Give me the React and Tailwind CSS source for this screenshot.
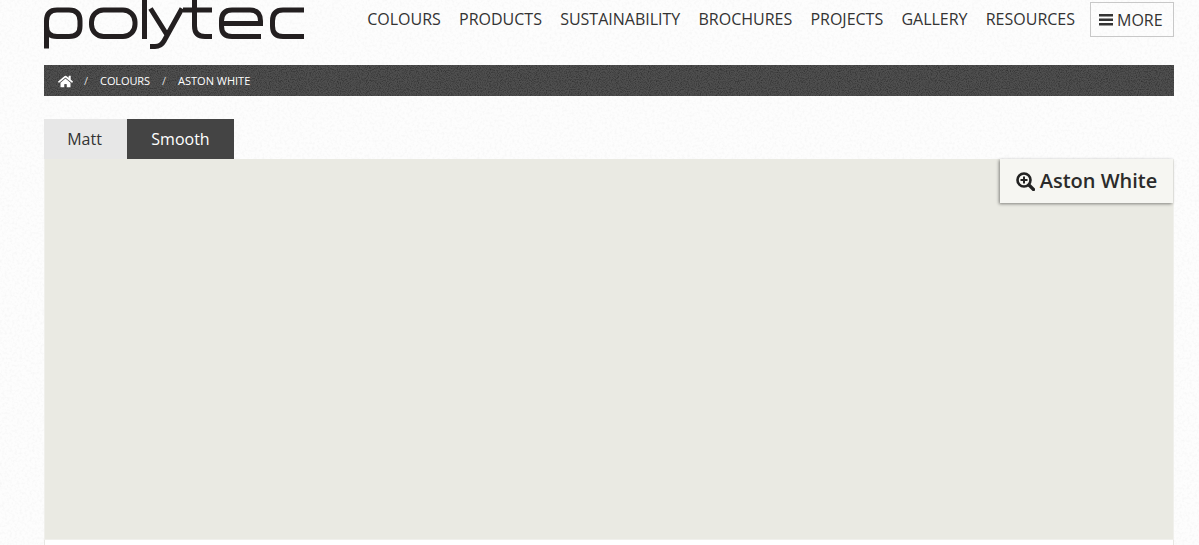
import React from "react";
import { FaHome } from "react-icons/fa";

const nav = ["COLOURS", "PRODUCTS", "SUSTAINABILITY", "BROCHURES", "PROJECTS", "GALLERY"];

function Noise({ id, freq, values }) {
  return (
    <svg className="absolute inset-0 w-full h-full pointer-events-none" aria-hidden="true">
      <filter id={id} x="0" y="0" width="100%" height="100%">
        <feTurbulence type="fractalNoise" baseFrequency={freq} numOctaves="2" seed="3" />
        <feColorMatrix type="matrix" values={values} />
      </filter>
      <rect width="100%" height="100%" filter={`url(#${id})`} />
    </svg>
  );
}

function Logo() {
  return (
    <svg width="262" height="50" viewBox="0 0 262 50" fill="none" stroke="#231f20" strokeWidth="5" className="block shrink-0">
      <path d="M2.500 48.500V21Q2.500 10 13 10H25Q36 10 36 21V26Q36 36.500 25 36.500H13Q2.500 36.500 2.500 26" />
      <rect x="47.500" y="10" width="43.500" height="26.500" rx="12" />
      <path d="M100.500 0V39" />
      <path d="M106.500 8.500L124 36.500M138 8.500L120 41Q117 46.500 111 46.500H106" />
      <path d="M139 10H168M150.500 0V26Q150.500 36.500 161 36.500H168" />
      <path d="M217 36.500H188Q177.500 36.500 177.500 26V21Q177.500 10 188 10H206Q216.500 10 216.500 21V23.500H177.500" />
      <path d="M260 10H239Q228.500 10 228.500 21V26Q228.500 36.500 239 36.500H260" />
    </svg>
  );
}

export default function App() {
  return (
    <div className="relative h-[545px] overflow-hidden bg-[#fdfdfd] font-['Open_Sans','Noto_Sans',sans-serif]">
      <Noise id="pagenoise" freq="0.4" values="0 0 0 0 0.7  0 0 0 0 0.7  0 0 0 0 0.7  0 0 0 0.4 -0.17" />
      <div className="relative mx-[44px] w-[1130px]">
        <header className="flex h-[65px] justify-between">
          <Logo />
          <nav className="flex h-[37px] items-center pt-[1px] text-[16px] text-[#333333]">
            {nav.map((n) => (
              <span key={n} className="mr-[18.200px] leading-[36px]">{n}</span>
            ))}
            <span className="mr-[15px] leading-[36px]">RESOURCES</span>
            <span className="mt-[1px] flex h-[35px] w-[84px] items-center gap-[4px] border border-[#c8c8c8] pl-[8px]">
              <svg width="14" height="12" viewBox="0 0 14 12" fill="#333333">
                <rect y="0" width="14" height="2.500" />
                <rect y="4.500" width="14" height="2.500" />
                <rect y="9" width="14" height="2.500" />
              </svg>
              MORE
            </span>
          </nav>
        </header>

        <div className="relative flex h-[31px] items-center overflow-hidden bg-[#4f4f4f] pl-[14px] text-[11px] text-white">
          <Noise id="barnoise" freq="0.9" values="0 0 0 0 0  0 0 0 0 0  0 0 0 0 0  0 0 0 0.800 -0.320" />
          <span className="relative flex items-center pt-[1px]">
            <FaHome size={15} color="#ffffff" />
            <span className="ml-[11px] text-[#dddddd]">/</span>
            <span className="ml-[12px] tracking-[-0.1px]">COLOURS</span>
            <span className="ml-[12px] text-[#dddddd]">/</span>
            <span className="ml-[12px]">ASTON WHITE</span>
          </span>
        </div>

        <div className="mt-[23px] flex h-[40px] text-[16px]">
          <span className="flex w-[83px] items-center justify-center bg-[#e7e7e7] pr-[2px] text-[#333333]">Matt</span>
          <span className="flex w-[107px] items-center justify-center bg-[#444444] text-white">Smooth</span>
        </div>

        <div className="relative h-[381px] border-x border-b border-[#f0f0ec] bg-[#eaeae3]">
          <div className="absolute right-0 top-0 flex h-[44px] w-[173px] items-center justify-center gap-[5px] bg-[#f6f6f2] text-[20px] font-semibold text-[#2b2b2b] shadow-[-1px_1px_3px_rgba(0,0,0,0.45)]">
            <svg width="19" height="19" viewBox="0 0 19 19" fill="none" stroke="#222222">
              <circle cx="8" cy="8" r="6.500" strokeWidth="2.600" />
              <path d="M13 13L17.500 17.500" strokeWidth="3.200" strokeLinecap="round" />
              <path d="M4.500 8H11.500M8 4.500V11.500" strokeWidth="2" />
            </svg>
            Aston White
          </div>
        </div>
        <div className="h-[10px] border-x border-[#e8e8e4] bg-white" />
      </div>
    </div>
  );
}
